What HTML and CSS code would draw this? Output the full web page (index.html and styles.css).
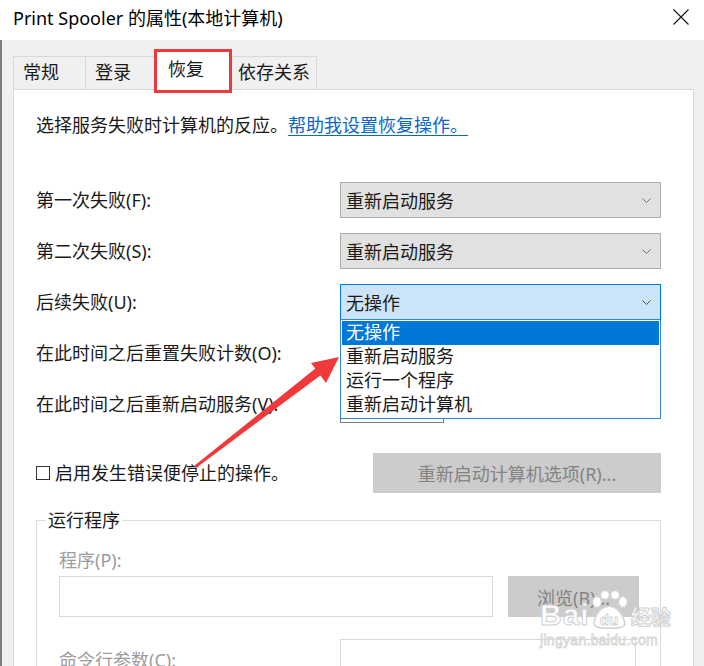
FILE: index.html
```
<!DOCTYPE html>
<html lang="zh-CN">
<head>
  <meta charset="UTF-8">
  <title>Print Spooler 的属性(本地计算机)</title>
  <link rel="stylesheet" href="styles.css">
</head>
<body>
  <div class="window">
    <header class="titlebar">
      <span class="title">Print Spooler 的属性(本地计算机)</span>
      <svg class="close" width="16" height="16" viewBox="0 0 16 16">
        <path d="M0.5 0.5 L15.5 15.5 M15.5 0.5 L0.5 15.5" stroke="#111" stroke-width="1.1" fill="none"/>
      </svg>
    </header>

    <div class="client">
      <nav class="tabs">
        <span class="tab tab-general">常规</span>
        <span class="tab tab-logon">登录</span>
        <span class="tab tab-recovery active">恢复</span>
        <span class="tab tab-deps">依存关系</span>
      </nav>

      <section class="panel">
        <p class="intro">选择服务失败时计算机的反应。<a href="#">帮助我设置恢复操作。</a></p>

        <div class="rows">
          <label class="row-label">第一次失败(F):</label>
          <div class="select">
            <span>重新启动服务</span>
            <svg class="chev" width="9" height="5" viewBox="0 0 9 5"><polyline points="0.5,0.5 4.5,4.5 8.5,0.5" fill="none" stroke="#707070"/></svg>
          </div>

          <label class="row-label">第二次失败(S):</label>
          <div class="select">
            <span>重新启动服务</span>
            <svg class="chev" width="9" height="5" viewBox="0 0 9 5"><polyline points="0.5,0.5 4.5,4.5 8.5,0.5" fill="none" stroke="#707070"/></svg>
          </div>

          <label class="row-label">后续失败(U):</label>
          <div class="select focused">
            <span>无操作</span>
            <svg class="chev" width="9" height="5" viewBox="0 0 9 5"><polyline points="0.5,0.5 4.5,4.5 8.5,0.5" fill="none" stroke="#505050"/></svg>
            <ul class="droplist">
              <li class="hl">无操作</li>
              <li>重新启动服务</li>
              <li>运行一个程序</li>
              <li>重新启动计算机</li>
            </ul>
          </div>

          <label class="row-label">在此时间之后重置失败计数(O):</label>
          <div class="textbox small"></div>

          <label class="row-label">在此时间之后重新启动服务(V):</label>
          <div class="textbox small"></div>
        </div>

        <div class="check-row">
          <label class="check"><span class="box"></span>启用发生错误便停止的操作。</label>
          <button class="btn wide" disabled>重新启动计算机选项(R)...</button>
        </div>

        <fieldset class="group">
          <legend>运行程序</legend>
          <div class="dim-label">程序(P):</div>
          <div class="prog-row">
            <div class="textbox prog"></div>
            <button class="btn browse" disabled>浏览(B)...</button>
          </div>
          <div class="args-row">
            <span class="dim-label">命令行参数(C):</span>
            <div class="textbox args"></div>
          </div>
        </fieldset>
      </section>
    </div>

    <svg class="arrow" width="704" height="666" viewBox="0 0 704 666">
      <polygon points="194,466 196,468 321,375 316,368" fill="#f0393a"/>
      <polygon points="339,357 311,363 326,383" fill="#f0393a"/>
    </svg>

    <div class="watermark">
      <div class="wm-logo">
        <span class="wm-bai">Bai</span>
        <svg class="wm-paw" width="42" height="40" viewBox="0 0 42 40">
          <ellipse cx="9" cy="12" rx="4.5" ry="5.5" fill="#fff" stroke="#d2d2d2" stroke-width="1.5"/>
          <ellipse cx="17" cy="5" rx="4.5" ry="4.5" fill="#fff" stroke="#d2d2d2" stroke-width="1.5"/>
          <ellipse cx="27" cy="5" rx="4.5" ry="4.5" fill="#fff" stroke="#d2d2d2" stroke-width="1.5"/>
          <ellipse cx="35" cy="12" rx="4.5" ry="5.5" fill="#fff" stroke="#d2d2d2" stroke-width="1.5"/>
          <path d="M6 34 Q8 18 21 16 Q34 18 37 34 Q36 39 21 38 Q7 39 6 34 Z" fill="#fff" stroke="#d2d2d2" stroke-width="1.5"/>
          <text x="21" y="35" text-anchor="middle" font-family="Liberation Sans, sans-serif" font-size="15" font-weight="bold" fill="#fff" stroke="#cfcfcf" stroke-width="0.8">du</text>
        </svg>
        <span class="wm-jy">经验</span>
      </div>
      <div class="wm-url">jingyan.baidu.com</div>
    </div>
  </div>
</body>
</html>
```

FILE: styles.css
```
/* Ventana de propiedades del servicio */
html, body {
  margin: 0;
  padding: 0;
}

body {
  width: 704px;
  height: 666px;
  overflow: hidden;
  background: #f0f0f0;
  font-family: "Noto Sans", "Noto Sans CJK SC", sans-serif;
  font-size: 18px;
  color: #1a1a1a;
}

.window {
  position: relative;
  width: 704px;
  height: 666px;
  overflow: hidden;
}

.titlebar {
  height: 40px;
  background: #fff;
  display: flex;
  align-items: center;
  justify-content: space-between;
  padding: 0 15px 0 13px;
}

.title {
  line-height: 40px;
  color: #000;
  margin-top: -4px;
}

.close {
  margin-top: -6px;
}

.client {
  border-left: 2px solid #7c7c7c;
  height: 626px;
  padding: 0 10px 0 11px;
}

/* pestañas */
.tabs {
  display: flex;
  align-items: flex-end;
  height: 49px;
  padding-left: 1px;
}

.tab {
  box-sizing: border-box;
  height: 33px;
  line-height: 31px;
  border: 1px solid #d9d9d9;
  border-bottom: none;
  background: #f0f0f0;
  padding-left: 9px;
  margin-left: -1px;
}

.tab-general { width: 73px; }
.tab-logon { width: 70px; }
.tab-deps { width: 87px; padding-left: 7px; }

.tab.active {
  position: relative;
  z-index: 2;
  width: 76px;
  height: 40px;
  line-height: 37px;
  padding-left: 12px;
  background: #fff;
  margin-bottom: -1px;
  margin-left: 0;
  margin-right: 0;
}

.tab.active::after {
  content: "";
  position: absolute;
  left: -2px;
  right: -2px;
  top: -2px;
  bottom: -3px;
  border: 3px solid #ea3a3c;
}

.panel {
  position: relative;
  background: #fff;
  border: 1px solid #d9d9d9;
  height: 600px;
  padding: 23px 31px 0 22px;
}

.intro {
  margin: 0;
  line-height: 24px;
}

.intro a {
  color: #0a66cc;
  text-decoration: underline;
  text-underline-offset: 3px;
}

/* filas de acciones */
.rows {
  display: grid;
  grid-template-columns: 304px 321px;
  grid-auto-rows: 36px;
  row-gap: 15px;
  margin-top: 45px;
  align-items: center;
}

.row-label {
  line-height: 24px;
}

.select {
  position: relative;
  box-sizing: border-box;
  height: 36px;
  background: #e1e1e1;
  border: 1px solid #adadad;
  display: flex;
  align-items: center;
  justify-content: space-between;
  padding: 0 9px 0 5px;
}

.select.focused {
  background: #cce4f7;
  border-color: #0078d7;
  z-index: 3;
}

.droplist {
  position: absolute;
  left: -1px;
  top: 34px;
  width: 321px;
  box-sizing: border-box;
  margin: 0;
  padding: 1px;
  list-style: none;
  background: #fff;
  border: 1px solid #2f86d8;
}

.droplist li {
  height: 24px;
  line-height: 23px;
  padding-left: 4px;
}

.droplist li.hl {
  background: #0078d7;
  color: #fff;
}

.textbox {
  box-sizing: border-box;
  background: #fff;
  border: 1px solid #7a7a7a;
}

.textbox.small {
  width: 104px;
  height: 37px;
}

/* casilla y botón */
.check-row {
  display: flex;
  justify-content: space-between;
  align-items: center;
  margin-top: 31px;
  margin-right: 1px;
}

.check {
  display: flex;
  align-items: center;
  line-height: 24px;
}

.box {
  display: inline-block;
  width: 12px;
  height: 12px;
  border: 1px solid #333;
  margin-right: 5px;
}

.btn {
  font: inherit;
  background: #cccccc;
  border: 1px solid #cccccc;
  color: #838383;
  height: 40px;
  padding: 0;
}

.btn.wide {
  width: 288px;
}

/* grupo "ejecutar programa" */
.group {
  margin: 15px 1px 0 0;
  border: 1px solid #dcdcdc;
  padding: 16px 21px 0 22px;
  height: 200px;
}

.group legend {
  padding: 0 2px;
  margin-left: -13px;
  line-height: 24px;
}

.dim-label {
  color: #9c9c9c;
  line-height: 24px;
}

.prog-row {
  display: flex;
  justify-content: space-between;
  margin-top: 4px;
}

.textbox.prog {
  width: 434px;
  height: 41px;
  border-color: #d9d9d9;
}

.btn.browse {
  width: 131px;
  height: 41px;
}

.args-row {
  display: flex;
  align-items: center;
  margin-top: 22px;
}

.args-row .dim-label {
  width: 281px;
}

.textbox.args {
  width: 296px;
  height: 41px;
  border-color: #d9d9d9;
}

/* anotaciones superpuestas */
.arrow {
  position: absolute;
  left: 0;
  top: 0;
  pointer-events: none;
  z-index: 5;
}

.watermark {
  position: absolute;
  left: 540px;
  top: 588px;
  z-index: 6;
  color: #fff;
  pointer-events: none;
}

.wm-logo {
  display: flex;
  align-items: flex-end;
  height: 42px;
}

.wm-bai {
  font-family: "Liberation Sans", sans-serif;
  font-weight: bold;
  font-size: 30px;
  line-height: 30px;
  -webkit-text-stroke: 1px #d0d0d0;
  letter-spacing: 1px;
}

.wm-paw {
  margin-left: -2px;
}

.wm-jy {
  font-family: "Noto Sans CJK SC", sans-serif;
  font-weight: bold;
  font-size: 20px;
  line-height: 26px;
  -webkit-text-stroke: 1px #d0d0d0;
  margin-left: 1px;
}

.wm-url {
  font-family: "Liberation Sans", sans-serif;
  font-size: 14px;
  line-height: 16px;
  -webkit-text-stroke: 0.8px #d3d3d3;
  margin-top: 2px;
  letter-spacing: 0.3px;
}
```
